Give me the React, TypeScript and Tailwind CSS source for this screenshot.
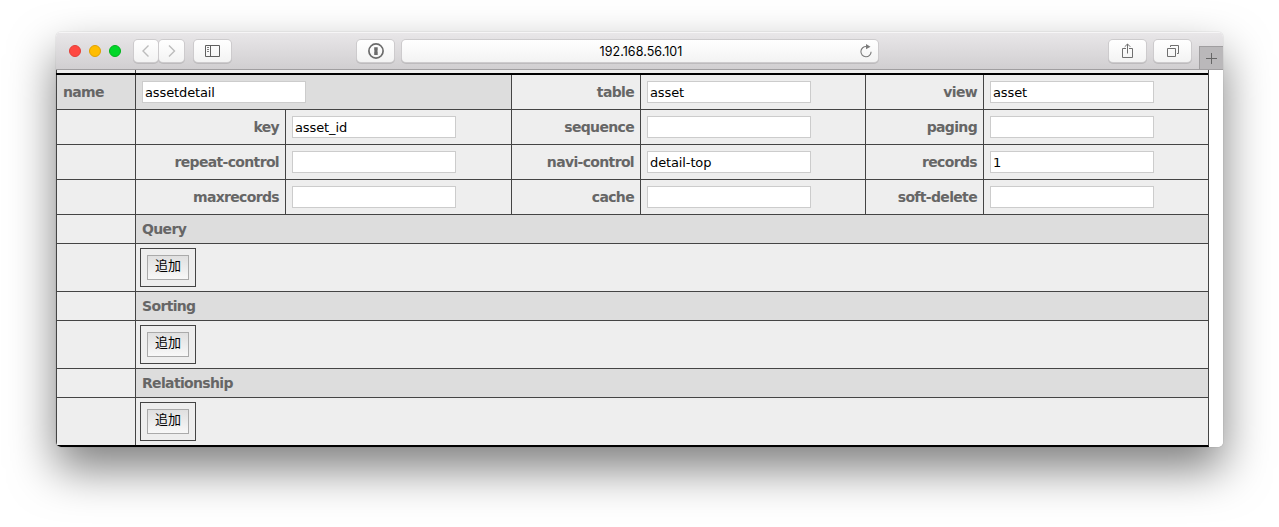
import React from 'react';

interface Field {
  label: string;
  value: string;
}

const fieldRows: Field[][] = [
  [
    { label: 'key', value: 'asset_id' },
    { label: 'sequence', value: '' },
    { label: 'paging', value: '' },
  ],
  [
    { label: 'repeat-control', value: '' },
    { label: 'navi-control', value: 'detail-top' },
    { label: 'records', value: '1' },
  ],
  [
    { label: 'maxrecords', value: '' },
    { label: 'cache', value: '' },
    { label: 'soft-delete', value: '' },
  ],
];

const sections = ['Query', 'Sorting', 'Relationship'];

const labelWidths = ['w-[150px]', 'w-[129px]', 'w-[118px]'];
const inputWidths = ['w-[226px]', 'w-[225px]', 'w-[225px]'];

const ToolbarButton: React.FC<{ className: string; children: React.ReactNode }> = ({ className, children }) => (
  <button
    className={`flex h-[22px] shrink-0 items-center justify-center rounded-[4px] bg-linear-to-b from-white to-[#f3f3f3] shadow-[0_0_0_1px_#cdcbcd,0_1px_0_1px_#bdbbbd] ${className}`}
  >
    {children}
  </button>
);

const TextInput: React.FC<{ value: string }> = ({ value }) => (
  <input
    type="text"
    defaultValue={value}
    className="block h-[22px] w-[164px] border border-[#cccccc] bg-white px-[2px] pt-px font-['DejaVu_Sans',sans-serif] text-[13px] tracking-[-0.12px] text-black outline-none"
  />
);

const FieldPair: React.FC<{ field: Field; index: number }> = ({ field, index }) => (
  <>
    <div className={`flex items-center justify-end border-l border-[#444] pr-[6px] ${labelWidths[index]}`}>
      <Label>{field.label}</Label>
    </div>
    <div className={`flex items-center border-l border-[#444] pl-[6px] ${inputWidths[index]}`}>
      <TextInput value={field.value} />
    </div>
  </>
);

const Label: React.FC<{ children: React.ReactNode }> = ({ children }) => (
  <span className="text-[14px] leading-[18px] font-bold tracking-[-0.66px] whitespace-nowrap text-[#666]">{children}</span>
);

const Toolbar: React.FC = () => (
  <div className="flex h-[38px] items-start border-b border-[#a09ea0] bg-linear-to-b from-[#e9e7e9] to-[#d1cfd1] pt-2 shadow-[inset_0_1px_0_#f6f5f6]">
    <div className="flex h-[22px] w-[78px] shrink-0 items-center gap-2 pl-[13px]">
      <span className="h-3 w-3 rounded-full border border-[#e33e38] bg-[#ff4842]" />
      <span className="h-3 w-3 rounded-full border border-[#e0a100] bg-[#ffbd00]" />
      <span className="h-3 w-3 rounded-full border border-[#00b31c] bg-[#00d729]" />
    </div>
    <ToolbarButton className="w-6">
      <svg width="8" height="14" viewBox="0 0 8 14" fill="none" stroke="#bcbcbc" strokeWidth="1.4">
        <path d="M6.5 1.5 1 7 6.5 12.5" />
      </svg>
    </ToolbarButton>
    <ToolbarButton className="ml-px w-[25px]">
      <svg width="8" height="14" viewBox="0 0 8 14" fill="none" stroke="#bcbcbc" strokeWidth="1.4">
        <path d="M1 1.5 6.5 7 1 12.5" />
      </svg>
    </ToolbarButton>
    <ToolbarButton className="ml-[10px] w-[37px]">
      <svg width="15" height="12" viewBox="0 0 15 12" fill="none" stroke="#5f5f5f">
        <path d="M.5.5h14v11H.5zM5.5.5v11" />
        <path d="M2 2.5h2M2 4.5h2M2 6.5h2" strokeWidth=".8" />
      </svg>
    </ToolbarButton>
    <ToolbarButton className="ml-[126px] w-[37px]">
      <svg width="16" height="16" viewBox="0 0 16 16" fill="none">
        <circle cx="8" cy="8" r="7.1" stroke="#6b6b6b" strokeWidth="1.7" />
        <path d="M6.2 4.2h3.5v3.4l-.6.5.6.5v3.5H6.2V8.6l.6-.5-.6-.5z" fill="#6b6b6b" />
      </svg>
    </ToolbarButton>
    <div className="ml-[8px] flex h-[22px] w-[476px] shrink-0 items-center rounded-[4px] bg-linear-to-b from-white to-[#f3f3f3] pr-[6px] pl-[20px] shadow-[0_0_0_1px_#cdcbcd,0_1px_0_1px_#bdbbbd]">
      <span className="flex-1 pt-px text-center font-['Inter',sans-serif] text-[12.5px] leading-[16px] tracking-[0.05px] text-black">
        192.168.56.101
      </span>
      <svg width="12" height="14" viewBox="0 0 12 14" fill="none">
        <path d="M6.5 2.6A5.1 5.1 0 1 0 11.1 7.7" stroke="#7a7a7a" strokeWidth="1.1" />
        <path d="M6 0v5.2L10.5 2.8z" fill="#7a7a7a" />
      </svg>
    </div>
    <ToolbarButton className="ml-[231px] w-[37px]">
      <svg className="ml-px" width="12" height="16" viewBox="0 0 12 16" fill="none" stroke="#6f6f6f">
        <path d="M4 5.5H.5v9h10v-9H7M5.5 10.5V1M2.7 3.8 5.5 1l2.8 2.8" />
      </svg>
    </ToolbarButton>
    <ToolbarButton className="ml-[8px] w-[37px]">
      <svg className="ml-px" width="13" height="12" viewBox="0 0 13 12" fill="none" stroke="#6f6f6f">
        <path d="M.5 3.5h8v8h-8z" />
        <path d="M3.5 2V.5h8v8h-1.5" />
      </svg>
    </ToolbarButton>
    <button className="mt-[6px] ml-auto flex h-[23px] w-6 items-center justify-center border-t border-l border-[#a09ea0] bg-[#bab8ba]">
      <svg width="11" height="11" viewBox="0 0 11 11" stroke="#666">
        <path d="M0 5.5h11M5.5 0v11" />
      </svg>
    </button>
  </div>
);

const App: React.FC = () => {
  return (
    <div className="h-[527px] w-[1279px] overflow-hidden bg-white pt-8 pl-14 font-['DejaVu_Sans',sans-serif]">
      <div className="h-[415px] w-[1167px] rounded-[5px] shadow-[0_0_1px_rgba(0,0,0,0.4),0_22px_46px_rgba(0,0,0,0.5)]">
        <div className="h-full overflow-hidden rounded-[5px] bg-white">
          <Toolbar />

          <div className="w-[1153px] border-r border-b-2 border-r-[#444] border-b-black bg-[#eee]">
            {/* tail of the previous definition block */}
            <div className="flex h-[3px]">
              <div className="w-[79px] border-l border-[#444]" />
              <div className="flex-1 border-l border-[#444]" />
            </div>

            <div className="flex h-[37px] border-t-2 border-b border-t-black border-b-[#444]">
              <div className="flex w-[79px] items-center border-l border-[#444] bg-[#ddd] pl-[6px]">
                <Label>name</Label>
              </div>
              <div className="flex w-[376px] items-center border-l border-[#444] bg-[#ddd] pl-[6px]">
                <TextInput value="assetdetail" />
              </div>
              <FieldPair field={{ label: 'table', value: 'asset' }} index={1} />
              <FieldPair field={{ label: 'view', value: 'asset' }} index={2} />
            </div>

            {fieldRows.map((row) => (
              <div key={row[0].label} className="flex h-[35px] border-b border-[#444]">
                <div className="w-[79px] border-l border-[#444]" />
                {row.map((field, index) => (
                  <FieldPair key={field.label} field={field} index={index} />
                ))}
              </div>
            ))}

            {sections.map((title, index) => (
              <React.Fragment key={title}>
                <div className="flex h-[29px] border-b border-[#444]">
                  <div className="w-[79px] border-l border-[#444]" />
                  <div className="flex flex-1 items-center border-l border-[#444] bg-[#ddd] pl-[6px]">
                    <Label>{title}</Label>
                  </div>
                </div>
                <div className={`flex border-[#444] ${index < sections.length - 1 ? 'h-[48px] border-b' : 'h-[47px]'}`}>
                  <div className="w-[79px] border-l border-[#444]" />
                  <div className="flex-1 border-l border-[#444] pt-1 pl-1">
                    <div className="h-[39px] w-14 border border-[#444] p-[6px]">
                      <button className="flex h-[25px] w-[42px] items-center justify-center border border-[#aaa] bg-linear-to-b from-[#e0e0e0] to-[#f8f8f8] pb-[5px] font-['Noto_Sans_CJK_JP',sans-serif] text-[13px] leading-[18px] text-black">
                        追加
                      </button>
                    </div>
                  </div>
                </div>
              </React.Fragment>
            ))}
          </div>
        </div>
      </div>
    </div>
  );
};

export default App;
